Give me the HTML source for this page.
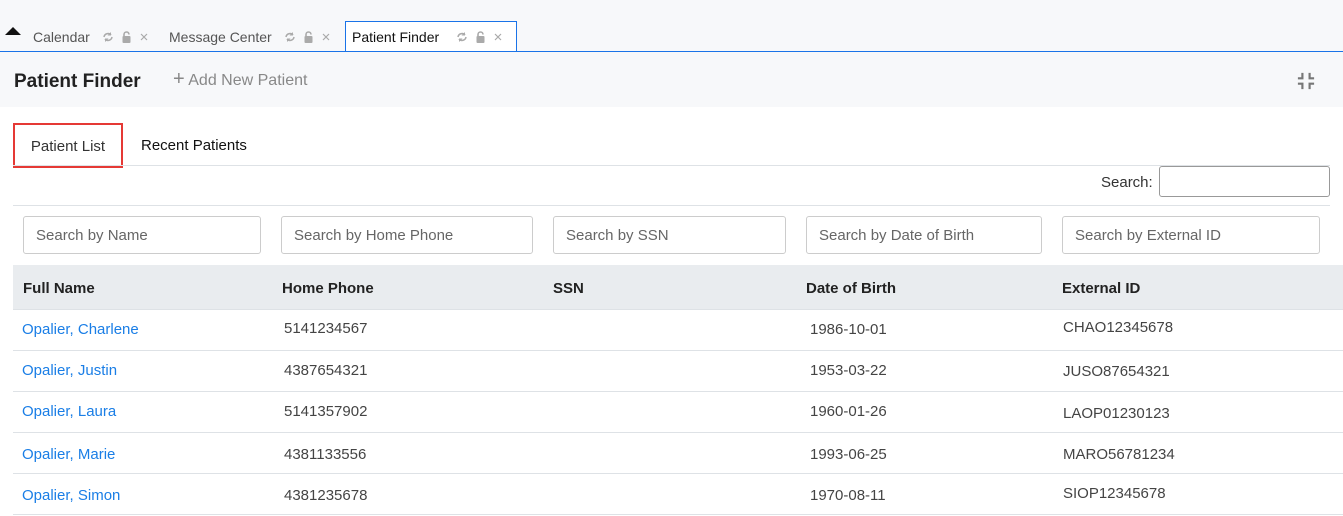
<!DOCTYPE html>
<html><head><style>
*{box-sizing:border-box}
body{margin:0;width:1343px;height:516px;overflow:hidden;background:#fff;font-family:"Liberation Sans",sans-serif;position:relative}
.a{position:absolute}
.top{left:0;top:0;width:1343px;height:107px;background:#f7f8fa}
.line{left:0;top:51px;width:1343px;height:1px;background:#1a73e8}
.tab{top:29px;font-size:14px;color:#555}
.in{top:216px;height:38px;border:1px solid #ccc;border-radius:3px;padding:0 12px;line-height:38px;color:#666;font-size:15px}
.th{top:280px;font-weight:bold;font-size:15px;color:#222}
.hr{left:13px;width:1317px;height:1px;background:#dee2e6}
.lk{color:#1a7ee6;font-size:15px}
.c{font-size:15px;color:#444}
</style></head><body>
<svg width="0" height="0" style="position:absolute"><defs>
<g id="ic"><path d="M2 6a4 4 0 0 1 7-2M10 6a4 4 0 0 1-7 2" stroke="#aaa" stroke-width="1.5" fill="none"/><path d="M9 1v3.5H5.5z M3 11V7.5h3.5z" fill="#aaa"/>
<path d="M22 5V3.5a2.5 2.5 0 0 1 5 0" stroke="#aaa" stroke-width="1.6" fill="none"/><rect x="20.5" y="5" width="8" height="7" rx="1" fill="#aaa"/>
<path d="M39 3l6 6M45 3l-6 6" stroke="#aaa" stroke-width="1.2"/></g></defs></svg>
<div class="a top"></div>
<div class="a" style="left:345px;top:21px;width:172px;height:31px;background:#fff;border:1px solid #1a73e8;border-bottom:none"></div>
<div class="a line"></div>
<div class="a" style="left:5px;top:27px;width:0;height:0;border-left:8px solid transparent;border-right:8px solid transparent;border-bottom:8px solid #111"></div>
<div class="a tab" style="left:33px">Calendar</div>
<svg class="a" style="left:102px;top:31px" width="50" height="13"><use href="#ic"/></svg>
<div class="a tab" style="left:169px">Message Center</div>
<svg class="a" style="left:284px;top:31px" width="50" height="13"><use href="#ic"/></svg>
<div class="a tab" style="left:352px;color:#111">Patient Finder</div>
<svg class="a" style="left:456px;top:31px" width="50" height="13"><use href="#ic"/></svg>
<div class="a" style="left:14px;top:71px;font-size:19px;font-weight:bold;color:#222">Patient Finder</div>
<div class="a" style="left:173px;top:71px;font-size:16px;color:#888"><span style="font-size:20px;line-height:16px">+</span> Add New Patient</div>
<svg class="a" style="left:1297px;top:72px" width="18" height="18" viewBox="0 0 20 20" fill="none" stroke="#777" stroke-width="2.4"><path d="M6 1v6H1M14 1v6h5M6 19v-6H1M14 19v-6h5"/></svg>
<div class="a" style="left:13px;top:123px;width:110px;height:45px;border:2px solid #e53935;font-size:15px;line-height:43px;text-align:center;color:#333">Patient List</div>
<div class="a" style="left:141px;top:137px;font-size:15px;color:#111">Recent Patients</div>
<div class="a hr" style="top:165px"></div>
<div class="a" style="left:1101px;top:174px;font-size:15px;color:#333">Search:</div>
<div class="a" style="left:1159px;top:166px;width:171px;height:31px;border:1px solid #999;border-radius:3px"></div>
<div class="a hr" style="top:205px"></div>
<div class="a in" style="left:23px;width:238px">Search by Name</div>
<div class="a in" style="left:281px;width:252px">Search by Home Phone</div>
<div class="a in" style="left:553px;width:233px">Search by SSN</div>
<div class="a in" style="left:806px;width:236px">Search by Date of Birth</div>
<div class="a in" style="left:1062px;width:258px">Search by External ID</div>
<div class="a" style="left:13px;top:265px;width:1330px;height:44px;background:#e9ecef"></div>
<div class="a th" style="left:23px">Full Name</div>
<div class="a th" style="left:282px">Home Phone</div>
<div class="a th" style="left:553px">SSN</div>
<div class="a th" style="left:806px">Date of Birth</div>
<div class="a th" style="left:1062px">External ID</div>
<div class="a hr" style="top:309px;width:1330px"></div>
<div class="a hr" style="top:350px;width:1330px"></div>
<div class="a hr" style="top:391px;width:1330px"></div>
<div class="a hr" style="top:432px;width:1330px"></div>
<div class="a hr" style="top:473px;width:1330px"></div>
<div class="a hr" style="top:514px;width:1330px"></div>
<div class="a lk" style="left:22px;top:321px">Opalier, Charlene</div><div class="a c" style="left:284px;top:320px">5141234567</div><div class="a c" style="left:810px;top:321px">1986-10-01</div><div class="a c" style="left:1063px;top:319px">CHAO12345678</div>
<div class="a lk" style="left:22px;top:362px">Opalier, Justin</div><div class="a c" style="left:284px;top:362px">4387654321</div><div class="a c" style="left:810px;top:362px">1953-03-22</div><div class="a c" style="left:1063px;top:363px">JUSO87654321</div>
<div class="a lk" style="left:22px;top:403px">Opalier, Laura</div><div class="a c" style="left:284px;top:403px">5141357902</div><div class="a c" style="left:810px;top:403px">1960-01-26</div><div class="a c" style="left:1063px;top:405px">LAOP01230123</div>
<div class="a lk" style="left:22px;top:446px">Opalier, Marie</div><div class="a c" style="left:284px;top:446px">4381133556</div><div class="a c" style="left:810px;top:446px">1993-06-25</div><div class="a c" style="left:1063px;top:446px">MARO56781234</div>
<div class="a lk" style="left:22px;top:487px">Opalier, Simon</div><div class="a c" style="left:284px;top:487px">4381235678</div><div class="a c" style="left:810px;top:487px">1970-08-11</div><div class="a c" style="left:1063px;top:485px">SIOP12345678</div>
</body></html>
